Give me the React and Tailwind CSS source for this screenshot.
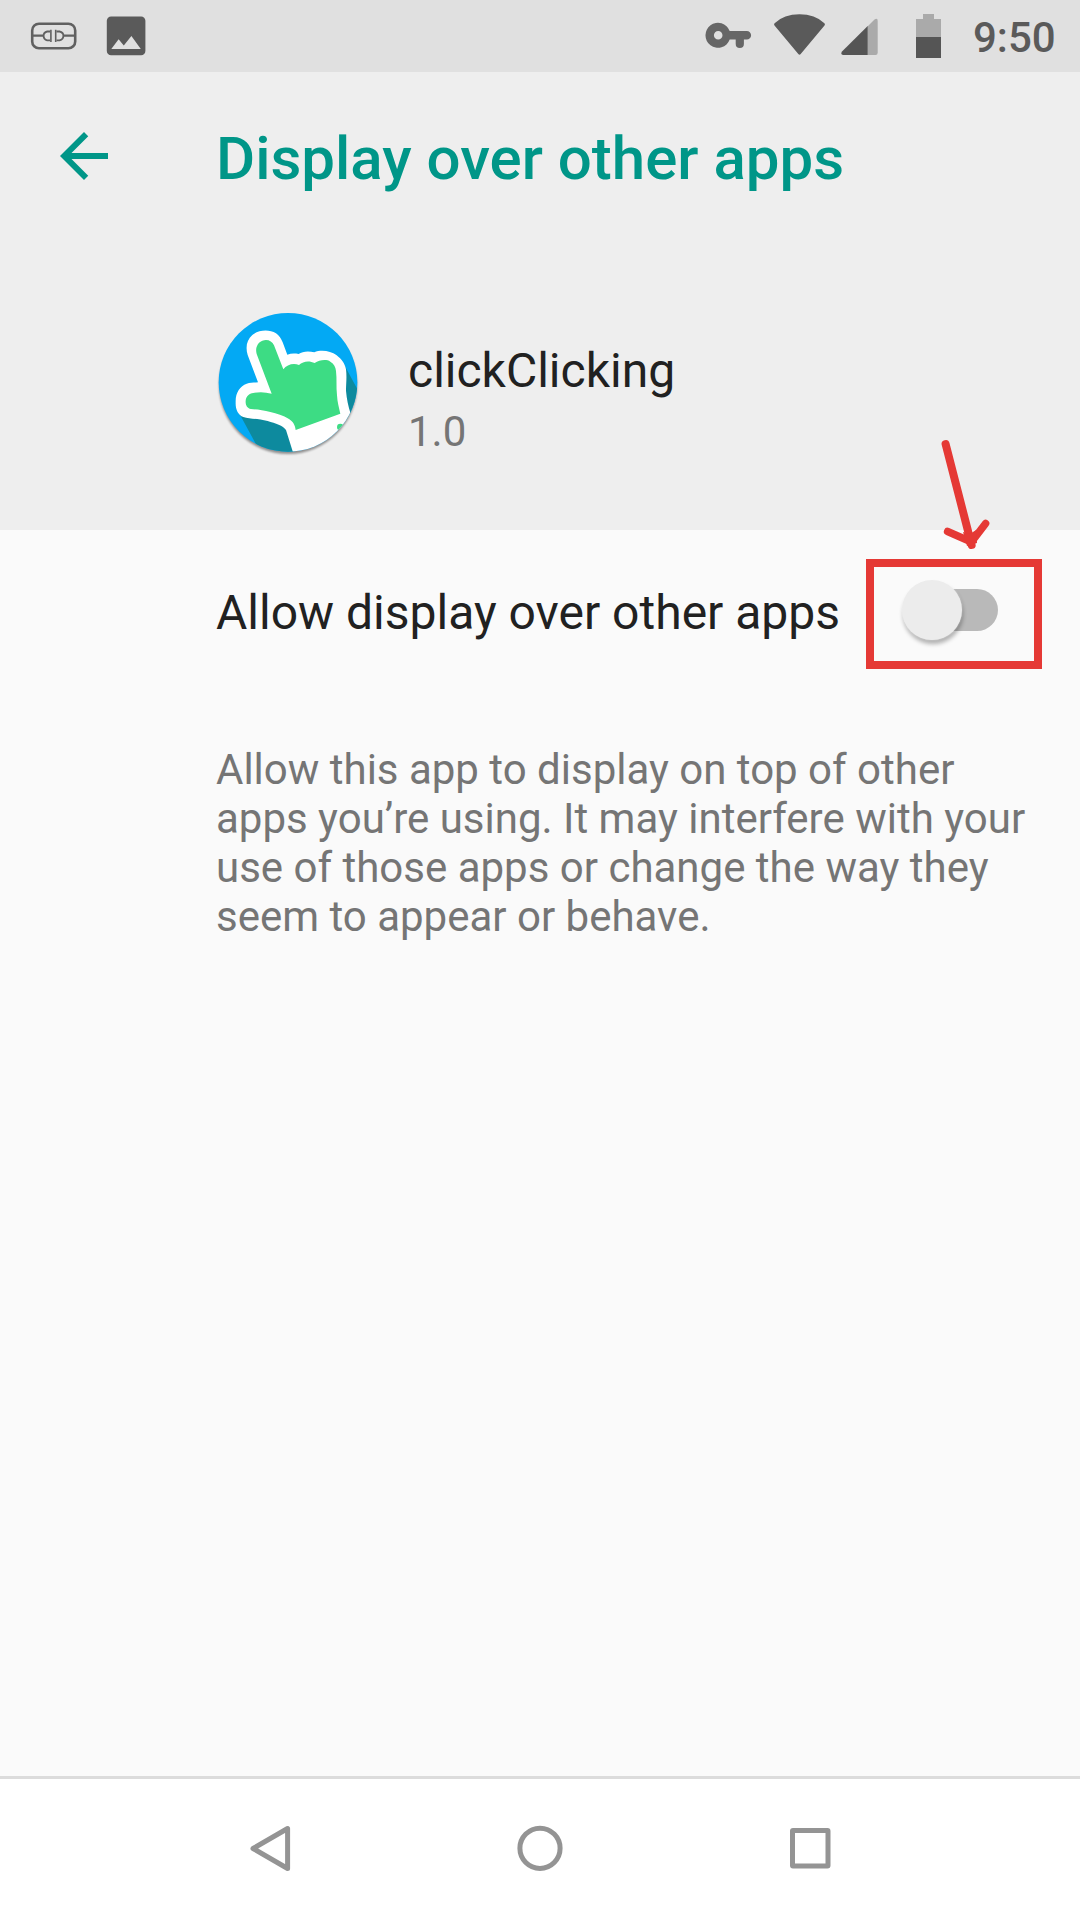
function LinkIcon() {
  return (
    <svg className="h-[30px] w-[48px]" viewBox="30 21 48 30" fill="none" stroke="#606060" strokeWidth="2.6">
      <rect x="32.2" y="23.700" width="43" height="24.500" rx="6.800" />
      <path strokeWidth="2.200" d="M32 35.600h11M64 35.600h11" />
      <path strokeWidth="1.600" d="M50.900 29.800v12.200M55.700 29.800v12.200" />
      <path strokeWidth="1.800" strokeLinejoin="round" d="M50 31.500h-2.800q-3.600 .8-3.600 4.200q0 3.600 3.600 4.700H50M56.500 31.500h3q3.900 .8 3.900 4.200q0 3.600-3.900 4.700h-3" />
    </svg>
  );
}

function ImageIcon() {
  return (
    <svg className="h-[40px] w-[40px]" viewBox="106 16 40 40">
      <rect x="106.800" y="16.500" width="38.600" height="38.700" rx="4.300" fill="#5a5a5a" />
      <path d="M111.300 49L118.600 39.300L123.800 45.400L131.400 36L140.800 49Z" fill="#e0e0e0" />
    </svg>
  );
}

function StatusIcons() {
  return (
    <div className="flex items-start">
      <svg className="h-[72px] w-[68px]" viewBox="705 0 68 72" fill="#666666">
        <path
          fillRule="evenodd"
          d="M729.700 31H746.800a4.300 4.300 0 0 1 0 8.600H743.900V43.900a4.100 4.100 0 0 1-8.200 0V39.600H729.700A12.500 12.500 0 1 1 729.700 31ZM718.200 31a4.300 4.300 0 1 0 0 8.600a4.300 4.300 0 0 0 0-8.600Z"
        />
      </svg>
      <svg className="h-[72px] w-[66px]" viewBox="773 0 66 72" fill="#5a5a5a">
        <path d="M774.600 23.200Q784 14.300 799.500 14.300T824.400 23.200Q825.500 24.200 824.500 25.500L800.700 54.100Q799.500 55.600 798.300 54.100L774.500 25.500Q773.500 24.200 774.600 23.200Z" />
      </svg>
      <svg className="h-[72px] w-[76px]" viewBox="839 0 76 72">
        <path d="M867.500 26.500L874.500 19.500Q877.700 17.500 877.700 21V52.800Q877.700 55 875.500 55H867.500Z" fill="#aaaaaa" />
        <path d="M867.700 26V55H843Q840.200 54.500 842 51.500Z" fill="#555555" />
      </svg>
      <svg className="h-[72px] w-[58px]" viewBox="915 0 58 72">
        <path d="M923 14h11v5h7v18h-25V19h7Z" fill="#aaaaaa" />
        <path d="M916 37h25v21h-25Z" fill="#555555" />
      </svg>
    </div>
  );
}

function AppIcon() {
  return (
    <svg className="h-[144px] w-[144px] shrink-0 overflow-visible" viewBox="48 60 432 432">
      <defs>
        <clipPath id="disc">
          <circle cx="264" cy="277" r="208" />
        </clipPath>
        <filter id="discShadow" x="-10%" y="-10%" width="120%" height="120%">
          <feGaussianBlur stdDeviation="3.500" />
        </filter>
      </defs>
      <circle cx="264" cy="285" r="207" fill="#000000" opacity="0.4" filter="url(#discShadow)" />
      <circle cx="264" cy="277" r="208" fill="#03a9f4" />
      <g clipPath="url(#disc)">
        <path d="M120 374L172 470L285 500L300 400ZM430 220L480 312L470 400L440 400Z" fill="#0d8a9e" />
        <path
          d="M174 277L143 195C136 172 140 150 157 135C175 120 207 117 228 130C237 136 243 145 248 157L262 194C272 190 284 190 296 192C307 184 325 182 343 187C363 178 393 183 409 195C426 208 435 222 438 238C441 263 438 280 438 302C440 327 445 348 451 368L500 430L420 500H283L258 420C249 407 227 400 203 393C174 386 149 387 130 381C114 375 106 358 107 337C106 307 120 289 140 281C151 277 163 278 174 277Z"
          fill="#ffffff"
        />
        <path
          d="M215 311L170 192C165 175 172 158 187 152C203 147 216 153 222 166L250 238C260 224 280 218 297 225C309 213 328 211 344 219C358 210 379 207 391 215C402 221 407 231 408 243C411 267 408 290 411 316C412 336 417 354 421 371L287 420C285 403 278 394 267 387C249 376 231 371 211 366C190 360 170 358 153 357C140 355 136 343 137 332C138 319 147 311 160 309C178 305 196 306 215 311Z"
          fill="#3ddc84"
        />
        <circle cx="421" cy="411" r="10" fill="#3ddc84" />
        <path d="M417 423L435 403L440 430L420 440Z" fill="#ffffff" />
      </g>
    </svg>
  );
}

function Switch() {
  return (
    <div className="flex h-[62px] w-[96px] items-center" role="switch" aria-checked="false">
      <div className="z-10 size-[60px] shrink-0 rounded-full bg-[#ececec] shadow-[0_0_2px_rgba(255,255,255,0.6),1px_4px_4px_rgba(0,0,0,0.3)]" />
      <div className="-ml-[39px] h-[42px] w-[75px] rounded-full bg-[#b9b9b9]" />
    </div>
  );
}

function Annotation() {
  return (
    <>
      <div className="absolute top-[559px] left-[866px] h-[110px] w-[176px] border-8 border-[#e53935]" />
      <svg
        className="absolute top-[430px] left-[930px] h-[130px] w-[80px]"
        viewBox="930 430 80 130"
        fill="none"
        stroke="#e53935"
        strokeWidth="7.500"
        strokeLinecap="round"
        strokeLinejoin="round"
      >
        <path strokeWidth="8" d="M945.600 444L971.600 545" />
        <path d="M947.600 531.500L971.500 542L985.600 523.500" />
        <path fill="#e53935" stroke="none" d="M963 532L970 534L976 530L977 543L967 546Z" />
      </svg>
    </>
  );
}

export default function App() {
  return (
    <div className="relative flex h-[1920px] w-[1080px] flex-col overflow-hidden bg-[#fafafa] font-[Roboto,sans-serif]">
      <div className="flex h-[72px] justify-between bg-[#e0e0e0]">
        <div className="flex h-[72px] items-center gap-7 pl-[30px]">
          <LinkIcon />
          <ImageIcon />
        </div>
        <div className="flex w-[375px] items-start">
          <StatusIcons />
          <span className="pt-[13px] text-[42px] leading-[49px] font-medium text-[#5a5a5a]">9:50</span>
        </div>
      </div>

      <header className="h-[458px] bg-[#eeeeee]">
        <div className="flex h-[168px] items-start pt-[52px]">
          <svg className="mt-[8px] ml-[60px] h-[48px] w-[48px]" viewBox="4 4 16 16" fill="#009688">
            <path d="M20 11H7.830l5.590-5.590L12 4l-8 8 8 8 1.410-1.410L7.830 13H20v-2z" />
          </svg>
          <h1 className="ml-[108px] text-[60px] leading-[70px] font-medium text-[#009688]">Display over other apps</h1>
        </div>
        <div className="flex items-start pt-[70px] pl-[216px]">
          <AppIcon />
          <div className="ml-12 pt-[33px]">
            <div className="text-[48px] leading-[56px] text-[#212121]">clickClicking</div>
            <div className="mt-[8px] text-[42px] leading-[49px] text-[#757575]">1.0</div>
          </div>
        </div>
      </header>

      <main className="flex-1 pl-[216px]">
        <div className="flex h-[160px] items-center justify-between pr-[82px]">
          <span className="pt-[6px] text-[48px] leading-[56px] text-[#212121]">Allow display over other apps</span>
          <Switch />
        </div>
        <p className="pt-[55px] text-[42px] leading-[49px] text-[#757575]">
          Allow this app to display on top of other
          <br />
          apps you’re using. It may interfere with your
          <br />
          use of those apps or change the way they
          <br />
          seem to appear or behave.
        </p>
      </main>

      <nav className="flex h-[144px] items-center justify-center gap-[222px] border-t-[3px] border-[#dcdcdc] bg-white pb-[3px]">
        <svg className="h-[48px] w-[48px]" viewBox="246 1824 48 48" fill="none" stroke="#949494" strokeWidth="5" strokeLinejoin="round">
          <path d="M287.600 1828.500V1868.500L253 1848.500Z" />
        </svg>
        <svg className="h-[48px] w-[48px]" viewBox="516 1824 48 48" fill="none" stroke="#949494" strokeWidth="5">
          <circle cx="540" cy="1848.300" r="20.100" />
        </svg>
        <svg className="h-[48px] w-[48px]" viewBox="786 1824 48 48" fill="none" stroke="#949494" strokeWidth="5">
          <rect x="792.500" y="1830.500" width="35.500" height="35.500" rx="0.500" strokeLinejoin="round" />
        </svg>
      </nav>

      <Annotation />
    </div>
  );
}
